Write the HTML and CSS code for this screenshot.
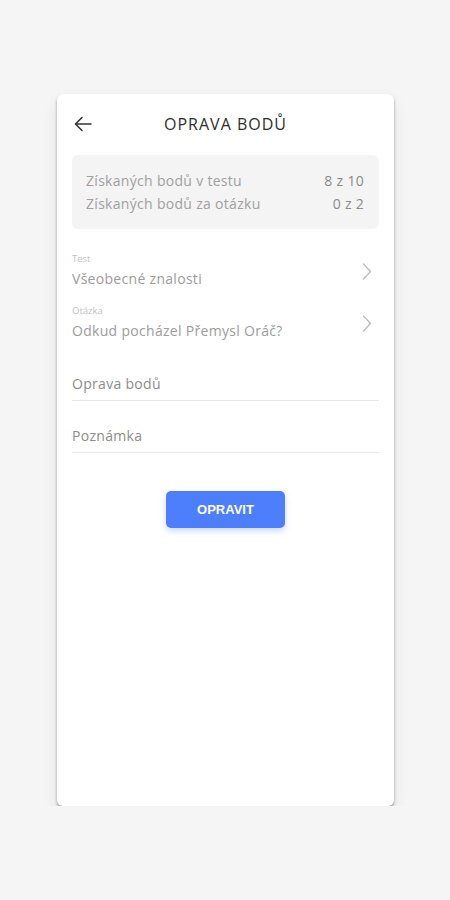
FILE: index.html
```html
<!DOCTYPE html>
<html lang="cs">
    <head>
        <meta charset="utf-8">
        <title>Oprava bodů</title>
        <link rel="stylesheet" href="styles.css">
    </head>
    <body>
        <main class="card">
            <header class="topBar">
                <span class="backBtn">
                    <svg width="18" height="16" viewBox="0 0 18 16" fill="none" stroke="#333" stroke-width="1.6" stroke-linecap="round" stroke-linejoin="round">
                        <path d="M17 8H2"/>
                        <path d="M8 1.5L1.5 8L8 14.5"/>
                    </svg>
                </span>
                <h1 class="title">OPRAVA BODŮ</h1>
                <span></span>
            </header>

            <section class="summary">
                <div class="summaryRow"><span>Získaných bodů v testu</span><span>8 z 10</span></div>
                <div class="summaryRow"><span>Získaných bodů za otázku</span><span>0 z 2</span></div>
            </section>

            <section class="pickers">
                <div class="pickItem">
                    <div class="pickText">
                        <div class="pickLabel">Test</div>
                        <div class="pickValue">Všeobecné znalosti</div>
                    </div>
                    <svg class="chevron" width="10" height="17" viewBox="0 0 10 17" fill="none" stroke="#bdbdbd" stroke-width="1.4" stroke-linecap="round" stroke-linejoin="round">
                        <path d="M1.5 1L8.5 8.5L1.5 16"/>
                    </svg>
                </div>
                <div class="pickItem">
                    <div class="pickText">
                        <div class="pickLabel">Otázka</div>
                        <div class="pickValue">Odkud pocházel Přemysl Oráč?</div>
                    </div>
                    <svg class="chevron" width="10" height="17" viewBox="0 0 10 17" fill="none" stroke="#bdbdbd" stroke-width="1.4" stroke-linecap="round" stroke-linejoin="round">
                        <path d="M1.5 1L8.5 8.5L1.5 16"/>
                    </svg>
                </div>
            </section>

            <section class="fields">
                <div class="field">Oprava bodů</div>
                <div class="field">Poznámka</div>
            </section>

            <div class="actions">
                <button class="submitBtn">OPRAVIT</button>
            </div>
        </main>
    </body>
</html>
```

FILE: styles.css
```css
body {
    margin: 0;
    padding: 94px 0 0 57px;
    background-color: #f5f5f5;
    font-family: 'Open Sans', Lato, sans-serif;
}

.card {
    box-sizing: border-box;
    width: 337px;
    height: 712px;
    padding: 0 15px;
    background-color: #ffffff;
    border-radius: 6px;
    box-shadow: 0 2px 3px rgba(0, 0, 0, 0.35), 0 8px 16px rgba(0, 0, 0, 0.08);
}

.topBar {
    display: grid;
    grid-template-columns: 1fr auto 1fr;
    align-items: center;
    height: 32px;
    padding-top: 14px;
}

.backBtn {
    display: flex;
    padding-left: 2px;
}

.title {
    margin: 0;
    font-size: 16px;
    font-weight: 400;
    letter-spacing: 1px;
    color: #2e2e2e;
}

.summary {
    margin-top: 15px;
    padding: 14px 15px 14px 14px;
    background-color: #f4f4f4;
    border-radius: 6px;
}

.summaryRow {
    display: flex;
    justify-content: space-between;
    line-height: 23px;
    font-size: 14px;
    letter-spacing: 0.3px;
    color: #a0a0a0;
}

.summaryRow span:last-child {
    color: #8a8a8a;
}

.pickers {
    margin-top: 14px;
}

.pickItem {
    display: flex;
    align-items: center;
    justify-content: space-between;
    padding: 8px 7px 4px 0;
}

.pickLabel {
    font-size: 9.5px;
    line-height: 16px;
    color: #c2c2c2;
}

.pickValue {
    font-size: 14px;
    line-height: 24px;
    letter-spacing: 0.3px;
    color: #9c9c9c;
}

.fields {
    margin-top: 2px;
}

.field {
    padding: 25px 0 6px 0;
    line-height: 20px;
    font-size: 14px;
    letter-spacing: 0.3px;
    color: #8c8c8c;
    border-bottom: 1px solid #e8e8e8;
}

.actions {
    display: flex;
    justify-content: center;
    margin-top: 38px;
}

.submitBtn {
    width: 119px;
    height: 37px;
    border: none;
    border-radius: 5px;
    background-color: #4d7efb;
    color: #ffffff;
    font-family: 'Liberation Sans', Arial, sans-serif;
    font-size: 13px;
    font-weight: 700;
    box-shadow: 0 3px 6px rgba(77, 126, 251, 0.3);
}
```
